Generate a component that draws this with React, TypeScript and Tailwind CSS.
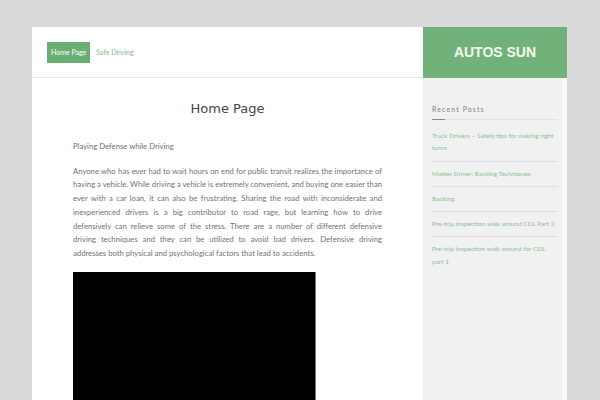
import React from "react";

const posts = [
  "Truck Drivers – Safety tips for making right turns",
  "Master Driver: Backing Techniques",
  "Backing",
  "Pre-trip Inspection walk around CDL Part 2",
  "Pre-trip Inspection walk around for CDL part 1",
];

const lines = [
  "Anyone who has ever had to wait hours on end for public transit realizes the importance of",
  "having a vehicle. While driving a vehicle is extremely convenient, and buying one easier than",
  "ever with a car loan, it can also be frustrating. Sharing the road with inconsiderate and",
  "inexperienced drivers is a big contributor to road rage, but learning how to drive",
  "defensively can relieve some of the stress. There are a number of different defensive",
  "driving techniques and they can be utilized to avoid bad drivers. Defensive driving",
];

export default function App() {
  return (
    <div className="min-h-[400px] h-[400px] overflow-hidden bg-[#d9d9d9] pt-[27px] font-['Lato','Open_Sans',sans-serif]">
      <div className="ml-[32px] flex w-[535px] h-[373px]">
        {/* Main column */}
        <div className="w-[391px] bg-white">
          <div className="flex h-[51px] items-center gap-[6px] border-b border-[#e6e6e6] pl-[15px]">
            <span className="flex h-[21px] items-center bg-[#6aae74] px-[4px] text-[7px] text-white">
              Home Page
            </span>
            <span className="text-[7px] text-[#86bb8b]">Safe Driving</span>
          </div>
          <div className="px-[41px]">
            <h1 className="mt-[23px] text-center font-['DejaVu_Sans',sans-serif] text-[13px] leading-[16px] text-[#444]">
              Home Page
            </h1>
            <p className="mt-[23px] text-[7.7px] leading-[13.7px] text-[#727272]">
              Playing Defense while Driving
            </p>
            <p className="mt-[11px] text-[7.7px] leading-[13.7px] text-[#727272]">
              {lines.map((l, i) => (
                <span key={i} className="block text-justify [text-align-last:justify]">
                  {l}
                </span>
              ))}
              <span className="block">addresses both physical and psychological factors that lead to accidents.</span>
            </p>
            <div className="mt-[11px] h-[200px] w-[243px] border-r border-[#777] bg-black" />
          </div>
        </div>
        {/* Sidebar */}
        <div className="flex w-[144px] flex-col">
          <div className="flex h-[51px] items-center justify-center bg-[#71b27a]">
            <span className="font-['Liberation_Sans',sans-serif] text-[14px] font-bold text-[#f4fbf2]">
              AUTOS SUN
            </span>
          </div>
          <div className="flex flex-1">
            <div className="w-[139px] bg-[#f1f1f1] pl-[9px] pr-[4px] pt-[26px]">
              <div className="text-[7px] leading-[10px] tracking-[1.1px] text-[#808080]">Recent Posts</div>
              <div className="relative mt-[5px] h-[1px] bg-[#e2e2e2]">
                <div className="absolute left-0 top-[-0.5px] h-[1.5px] w-[13px] bg-[#888]" />
              </div>
              <ul className="mt-[4px]">
                {posts.map((p, i) => (
                  <li
                    key={i}
                    className={`py-[6px] text-[6.5px] leading-[12.3px] text-[#8cbe91] ${
                      i < posts.length - 1 ? "border-b border-[#dedede]" : ""
                    }`}
                  >
                    {p}
                  </li>
                ))}
              </ul>
            </div>
            <div className="w-[5px] bg-[#f8f8f8]" />
          </div>
        </div>
      </div>
    </div>
  );
}
